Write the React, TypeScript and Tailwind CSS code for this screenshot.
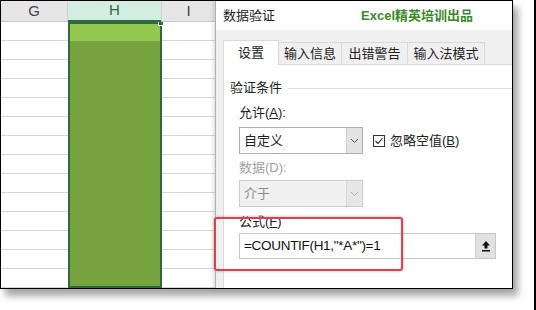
import React from "react";

const ROWS = Array.from({ length: 14 });

const Chevron = ({ color }: { color: string }) => (
  <svg width="9" height="6" viewBox="0 0 9 6" aria-hidden>
    <polyline points="1,1 4.5,4.5 8,1" fill="none" stroke={color} strokeWidth="1" />
  </svg>
);

const SheetColumn = ({ className }: { className: string }) => (
  <div className={`flex flex-col ${className}`}>
    {ROWS.map((_, i) => (
      <div key={i} className="h-[19px] shrink-0 border-b border-[#d6d6d6]" />
    ))}
  </div>
);

const Sheet: React.FC = () => {
  return (
    <div className="w-[214px] flex flex-col bg-white">
      <div className="h-[21px] flex bg-[#e6e6e6] text-[15px] text-[#444] border-b border-[#c8c8c8]">
        <div className="w-[67px] flex items-center justify-center border-r border-[#d0d0d0]">G</div>
        <div className="w-[93px] flex items-center justify-center bg-[#d3eee0] text-[#2d6b3e] border-b-2 border-[#2d6b3e] -mb-px">
          H
        </div>
        <div className="flex-1 flex items-center justify-center border-l border-[#d0d0d0]">I</div>
      </div>
      <div className="flex flex-1 overflow-hidden">
        <SheetColumn className="w-[67px]" />
        <div className="w-[94px] relative flex flex-col border-2 border-[#2d6b3e] bg-[#76a23f]">
          <div className="h-[17px] bg-[#93c94f]" />
          <div className="absolute -top-[4px] -right-[4px] w-[6px] h-[6px] bg-[#2d6b3e] border border-white" />
        </div>
        <SheetColumn className="flex-1" />
      </div>
    </div>
  );
};

const Tab = ({ label, active, width }: { label: string; active?: boolean; width: string }) =>
  active ? (
    <div className={`${width} h-[25px] -mb-px relative z-10 flex items-center justify-center bg-white border border-b-0 border-[#d9d9d9]`}>
      {label}
    </div>
  ) : (
    <div className={`${width} h-[22px] self-end flex items-center justify-center bg-[#f0f0f0] border border-l-0 border-b-0 border-[#d9d9d9]`}>
      {label}
    </div>
  );

const Dialog: React.FC = () => {
  return (
    <div className="w-[298px] flex flex-col bg-[#f0f0f0] border-l border-[#b0b0b0] border-r border-r-black shadow-[-2px_0_4px_rgba(0,0,0,0.12)] z-10">
      <div className="h-[29px] shrink-0 bg-white flex items-center pl-[7px] text-[13px] text-[#222]">
        <span>数据验证</span>
        <span className="ml-[86px] font-bold text-[#3a8a2c]">Excel精英培训出品</span>
      </div>
      <div className="flex-1 flex flex-col pl-[7px] pt-[10px] text-[13px] text-[#222] overflow-hidden">
        <div className="flex items-end">
          <Tab label="设置" active width="w-[56px]" />
          <Tab label="输入信息" width="w-[63px]" />
          <Tab label="出错警告" width="w-[66px]" />
          <Tab label="输入法模式" width="w-[77px]" />
        </div>
        <div className="flex-1 bg-white border-l border-t border-[#d9d9d9] pl-[6px] pt-[15px] flex flex-col">
          <div className="flex items-center h-[16px]">
            <span>验证条件</span>
            <div className="flex-1 h-px bg-[#dcdcdc] ml-[6px]" />
          </div>
          <div className="ml-[9px] flex flex-col">
            <div className="mt-[9px] h-[16px] leading-[16px]">
              允许(<span className="underline">A</span>):
            </div>
            <div className="mt-[6px] flex items-center">
              <div className="w-[124px] h-[27px] flex border border-[#adadad] bg-white">
                <div className="flex-1 flex items-center pl-[4px]">自定义</div>
                <div className="w-[16px] flex items-center justify-center bg-[#e3e3e3] border-l border-[#cfcfcf]">
                  <Chevron color="#555" />
                </div>
              </div>
              <div className="ml-[10px] w-[12px] h-[12px] border border-[#333] flex items-center justify-center">
                <svg width="10" height="10" viewBox="0 0 10 10" aria-hidden>
                  <polyline points="1.5,5 4,7.5 8.5,2" fill="none" stroke="#222" strokeWidth="1.1" />
                </svg>
              </div>
              <span className="ml-[5px]">
                忽略空值(<span className="underline">B</span>)
              </span>
            </div>
            <div className="mt-[6px] h-[16px] leading-[16px] text-[#a0a0a0]">数据(D):</div>
            <div className="mt-[4px] w-[124px] h-[27px] flex border border-[#cccccc] bg-[#f0f0f0]">
              <div className="flex-1 flex items-center pl-[4px] text-[#8c8c8c]">介于</div>
              <div className="w-[16px] flex items-center justify-center bg-[#e6e6e6] border-l border-[#d6d6d6]">
                <Chevron color="#b0b0b0" />
              </div>
            </div>
            <div className="mt-[7px] h-[16px] leading-[16px]">
              公式(<span className="underline">F</span>)
            </div>
            <div className="mt-[3px] w-[257px] h-[26px] flex border border-[#c6c6c6] bg-white">
              <div className="flex-1 flex items-center pl-[4px] text-[13.5px] text-[#111] tracking-[-0.3px]">
                =COUNTIF(H1,"*A*")=1
              </div>
              <div className="w-[20px] flex items-center justify-center bg-[#e1e1e1] border-l border-[#cfcfcf]">
                <svg width="10" height="12" viewBox="0 0 10 12" aria-hidden>
                  <path d="M5 1 L1 5.5 H3.5 V8.5 H6.5 V5.5 H9 Z" fill="#111" />
                  <rect x="1" y="10" width="8" height="1.5" fill="#111" />
                </svg>
              </div>
            </div>
          </div>
        </div>
      </div>
    </div>
  );
};

const App: React.FC = () => {
  return (
    <div className="w-[536px] h-[310px] bg-white border-r-2 border-black relative overflow-hidden font-['Liberation_Sans','Noto_Sans_CJK_SC',sans-serif]">
      <div className="w-[513px] h-[289px] flex border-l border-t border-b border-black shadow-[5px_7px_7px_rgba(0,0,0,0.35)]">
        <Sheet />
        <Dialog />
      </div>
      <div className="absolute left-[214px] top-[217px] w-[189px] h-[54px] border-2 border-[#e0404c] rounded-[3px] shadow-[0_0_3px_rgba(220,60,70,0.45)] z-20" />
    </div>
  );
};

export default App;
